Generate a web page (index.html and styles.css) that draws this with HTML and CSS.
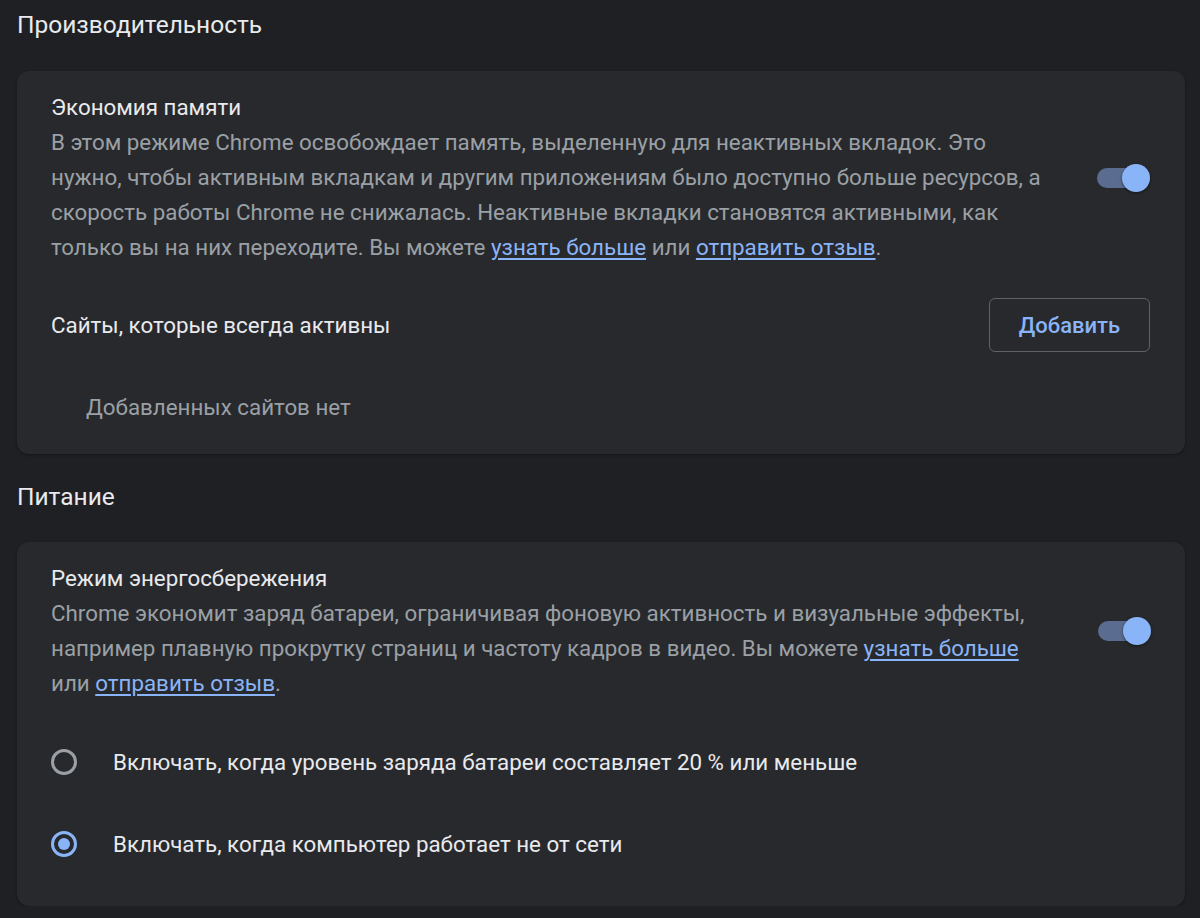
FILE: index.html
```html
<!DOCTYPE html>
<html lang="ru">
<head>
<meta charset="utf-8">
<link rel="stylesheet" href="styles.css">
</head>
<body>
<div class="page">
  <h2 class="section-title first">Производительность</h2>
  <section class="card card-memory">
    <div class="setting-row">
      <div class="setting-text">
        <div class="setting-label">Экономия памяти</div>
        <div class="setting-desc">В этом режиме Chrome освобождает память, выделенную для неактивных вкладок. Это нужно, чтобы активным вкладкам и другим приложениям было доступно больше ресурсов, а скорость работы Chrome не снижалась. Неактивные вкладки становятся активными, как только вы на них переходите. Вы можете <a href="#">узнать больше</a> или <a href="#">отправить отзыв</a>.</div>
      </div>
      <div class="toggle on"><span class="track"></span><span class="knob"></span></div>
    </div>
    <div class="sites-row">
      <div class="sites-label">Сайты, которые всегда активны</div>
      <button class="btn">Добавить</button>
    </div>
    <div class="empty">Добавленных сайтов нет</div>
  </section>

  <h2 class="section-title">Питание</h2>
  <section class="card card-power">
    <div class="setting-row">
      <div class="setting-text">
        <div class="setting-label">Режим энергосбережения</div>
        <div class="setting-desc">Chrome экономит заряд батареи, ограничивая фоновую активность и визуальные эффекты, например плавную прокрутку страниц и частоту кадров в видео. Вы можете <a href="#">узнать больше</a> или <a href="#">отправить отзыв</a>.</div>
      </div>
      <div class="toggle on"><span class="track"></span><span class="knob"></span></div>
    </div>
    <div class="radio-list">
      <div class="radio-row"><span class="radio"></span><span class="radio-label">Включать, когда уровень заряда батареи составляет 20 % или меньше</span></div>
      <div class="radio-row"><span class="radio checked"></span><span class="radio-label">Включать, когда компьютер работает не от сети</span></div>
    </div>
  </section>
</div>
</body>
</html>
```

FILE: styles.css
```css
html, body {
  margin: 0;
  padding: 0;
  background: #1f2023;
}
body {
  font-family: Roboto, "Noto Sans", sans-serif;
  color: #e8eaed;
  font-size: 22.35px;
}
.page {
  padding: 0 15px 0 17px;
}
.section-title {
  margin: 0;
  font-weight: 400;
  font-size: 24.5px;
  line-height: 30px;
  color: #e8eaed;
  padding: 28px 0 30px;
}
.section-title.first {
  padding-top: 10px;
  padding-bottom: 31px;
}
.card {
  background: #28292c;
  border-radius: 12px;
  box-shadow: 0 1px 3px rgba(0,0,0,0.35);
}
.card-memory {
  padding: 19px 35px 29px 34px;
}
.card-power {
  padding: 19px 34px 21px 34px;
}
.setting-row {
  display: flex;
  align-items: center;
  justify-content: space-between;
}
.setting-text {
  flex: 0 1 996px;
  line-height: 35px;
}
.setting-label {
  color: #e8eaed;
}
.setting-desc {
  color: #9aa0a6;
}
.setting-desc a {
  color: #8ab4f8;
  text-decoration: underline;
  text-underline-offset: 3px;
}
.toggle {
  position: relative;
  width: 54px;
  height: 28px;
  flex: none;
}
.toggle .track {
  position: absolute;
  left: 1px;
  top: 4px;
  width: 44px;
  height: 20px;
  border-radius: 10px;
  background: #5a6d90;
}
.toggle .knob {
  position: absolute;
  right: 0;
  top: 0;
  width: 28px;
  height: 28px;
  border-radius: 50%;
  background: #8ab4f8;
  box-shadow: 0 1px 3px rgba(0,0,0,0.5);
}
.sites-row {
  display: flex;
  align-items: center;
  justify-content: space-between;
  margin-top: 33px;
}
.sites-label {
  color: #e8eaed;
}
.btn {
  width: 161px;
  height: 54px;
  border: 1.5px solid #5f6368;
  border-radius: 6px;
  background: transparent;
  color: #8ab4f8;
  font-family: inherit;
  font-size: 22px;
  font-weight: 500;
}
.empty {
  color: #9aa0a6;
  padding-left: 35px;
  margin-top: 38px;
  line-height: 35px;
}
.radio-list {
  margin-top: 20px;
}
.radio-row {
  display: flex;
  align-items: center;
  height: 82px;
}
.radio {
  box-sizing: border-box;
  width: 26px;
  height: 26px;
  border-radius: 50%;
  border: 3px solid #9aa0a6;
  margin-right: 36px;
  display: flex;
  align-items: center;
  justify-content: center;
  flex: none;
}
.radio.checked {
  border-color: #8ab4f8;
}
.radio.checked::after {
  content: "";
  width: 12px;
  height: 12px;
  border-radius: 50%;
  background: #8ab4f8;
}
.radio-label {
  color: #e8eaed;
}
```
